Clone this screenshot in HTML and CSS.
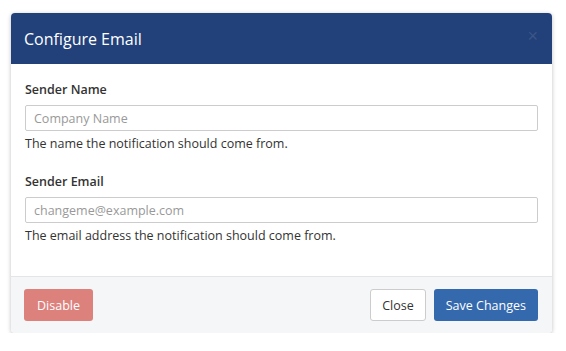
FILE: index.html
```html
<!DOCTYPE html>
<html>
<head>
    <meta charset="UTF-8">
    <title>Configure Email</title>
    <link rel="stylesheet" href="styles.css">
</head>
<body>
    <div class="modal">
        <div class="modal-header">
            <h3>Configure Email</h3>
            <button class="close-x">&times;</button>
        </div>
        <div class="modal-body">
            <div class="field">
                <label>Sender Name</label>
                <input type="text" placeholder="Company Name">
                <p class="help">The name the notification should come from.</p>
            </div>
            <div class="field">
                <label>Sender Email</label>
                <input type="text" placeholder="changeme@example.com">
                <p class="help">The email address the notification should come from.</p>
            </div>
        </div>
        <div class="modal-footer">
            <button class="btn btn-danger">Disable</button>
            <div class="right">
                <button class="btn btn-default">Close</button>
                <button class="btn btn-primary">Save Changes</button>
            </div>
        </div>
    </div>
</body>
</html>
```

FILE: styles.css
```css
body {
    margin: 0;
    padding: 13px 14px 0 11px;
    font-family: "Open Sans", Arial, sans-serif;
    background-color: #fff;
    color: #333;
}
.modal {
    width: 541px;
    background-color: white;
    border-radius: 4px;
    box-shadow: 0 1px 4px rgba(0,0,0,0.25);
    overflow: hidden;
}
.modal-header {
    background-color: #22417a;
    height: 51px;
    padding: 0 14px 0 13px;
    display: flex;
    align-items: center;
    justify-content: space-between;
}
.modal-header h3 {
    margin: 0;
    color: white;
    font-size: 16px;
    font-weight: normal;
}
.close-x {
    background: none;
    border: none;
    color: #3b5587;
    font-size: 18px;
    padding: 0 0 4px 0;
    cursor: pointer;
}
.modal-body {
    padding: 17px 14px 31px;
}
.field {
    margin-bottom: 20px;
}
.field:last-child {
    margin-bottom: 0;
}
label {
    display: block;
    font-size: 12.5px;
    line-height: 18px;
    font-weight: 600;
    margin-bottom: 6px;
}
input {
    display: block;
    box-sizing: border-box;
    width: 100%;
    height: 26px;
    padding: 4px 8px;
    border: 1px solid #ccc;
    border-radius: 2px;
    font-family: inherit;
    font-size: 12.5px;
}
input::placeholder {
    color: #999;
}
.help {
    margin: 4px 0 0;
    font-size: 12.5px;
    line-height: 18px;
}
.modal-footer {
    background-color: #f5f6f8;
    border-top: 1px solid #e3e5e8;
    padding: 12px 14px 12px 13px;
    display: flex;
    justify-content: space-between;
}
.right {
    display: flex;
    gap: 8px;
}
.btn {
    height: 32px;
    padding: 0 12px;
    border: 1px solid transparent;
    border-radius: 3px;
    font-family: inherit;
    font-size: 12.5px;
    cursor: pointer;
}
.btn-danger {
    background-color: #dc817c;
    color: white;
}
.btn-default {
    padding: 0 11px;
    background-color: white;
    border-color: #ccc;
    color: #333;
}
.btn-primary {
    padding: 0 11px;
    background-color: #3469ae;
    color: white;
}
```
